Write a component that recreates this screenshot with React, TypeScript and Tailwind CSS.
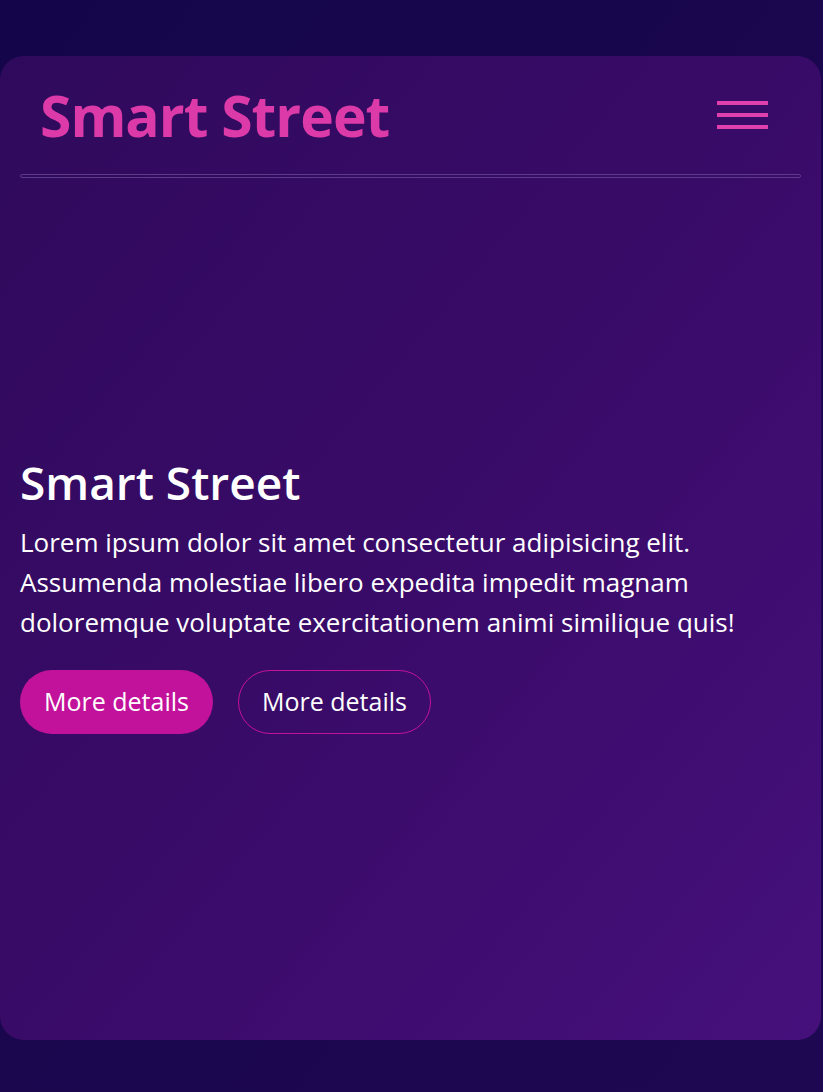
export default function App() {
  return (
    <div className="min-h-[1092px] bg-gradient-to-br from-[#14054a] to-[#1f0852] pt-14 pb-[52px] font-['Open_Sans',sans-serif]">
      <section className="mr-[2px] h-[984px] rounded-[24px] bg-gradient-to-br from-[#2f0a5c] via-[#390b68] to-[#46107c] flex flex-col">
        {/* Header */}
        <header className="px-5">
          <div className="flex items-center justify-between pl-5 pr-[33px] h-[118px]">
            <h1 className="text-[57px] font-bold tracking-[-1px] text-[#dc3aa8] leading-none">
              Smart Street
            </h1>
            <button className="flex flex-col gap-2 w-[51px]" aria-label="menu">
              <span className="h-[4px] bg-[#e040ae]" />
              <span className="h-[4px] bg-[#e040ae]" />
              <span className="h-[4px] bg-[#e040ae]" />
            </button>
          </div>
          <hr className="h-[4px] border border-[#5c3b88] rounded-sm" />
        </header>

        {/* Hero */}
        <div className="flex-1 flex flex-col justify-center px-5 pb-[30px]">
          <h2 className="text-[46px] font-semibold text-white leading-[56px]">Smart Street</h2>
          <p className="mt-[12px] text-[26px] leading-[40px] text-white max-w-[780px]">
            Lorem ipsum dolor sit amet consectetur adipisicing elit. Assumenda molestiae libero
            expedita impedit magnam doloremque voluptate exercitationem animi similique quis!
          </p>
          <div className="mt-[28px] flex gap-[25px]">
            <a href="#" className="w-[193px] h-[64px] rounded-full bg-[#c2129b] text-white text-[25px] flex items-center justify-center">
              More details
            </a>
            <a href="#" className="w-[193px] h-[64px] rounded-full border border-[#c2129b] text-white text-[25px] flex items-center justify-center">
              More details
            </a>
          </div>
        </div>
      </section>
    </div>
  )
}
